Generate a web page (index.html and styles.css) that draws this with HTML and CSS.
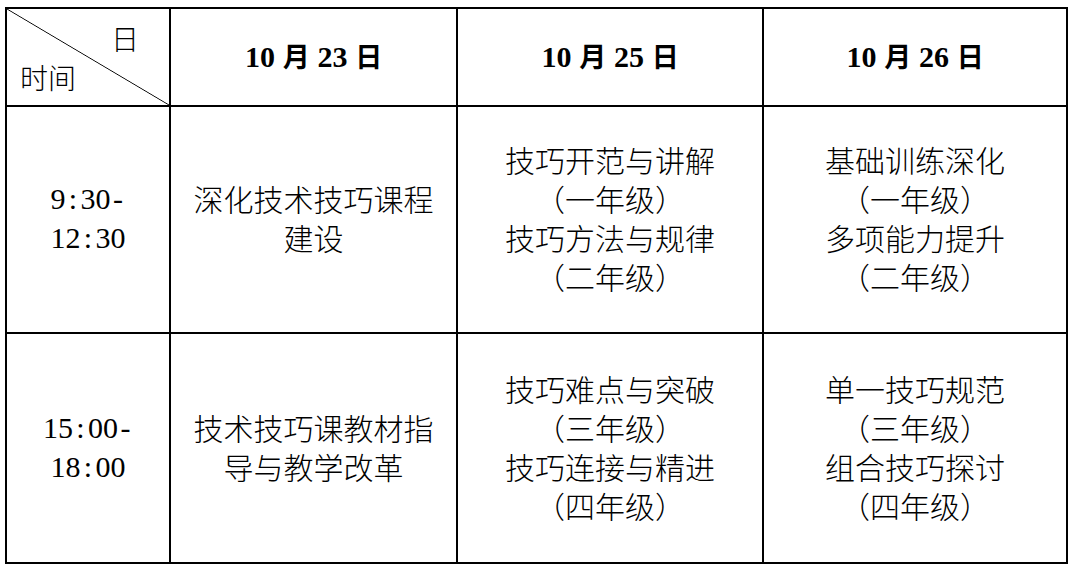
FILE: index.html
```html
<!DOCTYPE html>
<html lang="zh">
<head>
<meta charset="utf-8">
<link rel="stylesheet" href="styles.css">
</head>
<body>
<table class="schedule">
  <colgroup>
    <col class="c0"><col class="c1"><col class="c2"><col class="c3">
  </colgroup>
  <tr class="head">
    <td class="corner">
      <div class="corner-in">
        <span class="day">日</span>
        <span class="time">时间</span>
      </div>
    </td>
    <th><span class="num">10</span> 月 <span class="num">23</span> 日</th>
    <th><span class="num">10</span> 月 <span class="num">25</span> 日</th>
    <th><span class="num">10</span> 月 <span class="num">26</span> 日</th>
  </tr>
  <tr class="r1">
    <td class="t">9<span class="hw">:</span>30<span class="hw">-</span><br>12<span class="hw">:</span>30</td>
    <td>深化技术技巧课程<br>建设</td>
    <td>技巧开范与讲解<br>（一年级）<br>技巧方法与规律<br>（二年级）</td>
    <td>基础训练深化<br>（一年级）<br>多项能力提升<br>（二年级）</td>
  </tr>
  <tr class="r2">
    <td class="t">15<span class="hw">:</span>00<span class="hw">-</span><br>18<span class="hw">:</span>00</td>
    <td>技术技巧课教材指<br>导与教学改革</td>
    <td>技巧难点与突破<br>（三年级）<br>技巧连接与精进<br>（四年级）</td>
    <td>单一技巧规范<br>（三年级）<br>组合技巧探讨<br>（四年级）</td>
  </tr>
</table>
</body>
</html>
```
FILE: styles.css
```css
html, body {
  margin: 0;
  padding: 0;
  background: #fff;
}
body {
  padding: 7px 0 0 5px;
  font-family: "Noto Sans CJK SC", sans-serif;
  font-weight: 300;
  color: #000;
}
.schedule {
  border-collapse: collapse;
  table-layout: fixed;
  width: 1063px;
}
.c0 { width: 164px; }
.c1 { width: 287px; }
.c2 { width: 306px; }
.c3 { width: 304px; }
.schedule td, .schedule th {
  border: 2px solid #000;
  text-align: center;
  vertical-align: middle;
  padding: 0;
  font-size: 30px;
  line-height: 39px;
}
.r1 td, .r2 td { padding-bottom: 3px; }
.head { height: 96px; }
.r1 { height: 227px; }
.r2 { height: 230px; }
.schedule th {
  font-family: "Liberation Serif", "Noto Sans CJK SC", serif;
  font-weight: 700;
  font-size: 27px;
  word-spacing: 1px;
}
.num { font-family: "Liberation Serif", serif; font-size: 30px; }
.corner {
  background: linear-gradient(to top right, transparent calc(50% - 0.8px), #000 50%, transparent calc(50% + 0.8px));
}
.corner-in {
  height: 96px;
  display: flex;
  flex-direction: column;
  justify-content: space-between;
  padding: 12px 30px 11px 13px;
  box-sizing: border-box;
}
.day { align-self: flex-end; font-size: 28px; line-height: 34px; }
.time { align-self: flex-start; font-size: 28px; line-height: 34px; }
.t {
  font-family: "Liberation Serif", serif;
  font-weight: 400;
  font-size: 29px;
  line-height: 41px;
}
.hw {
  display: inline-block;
  width: 15px;
  text-align: center;
}
```
